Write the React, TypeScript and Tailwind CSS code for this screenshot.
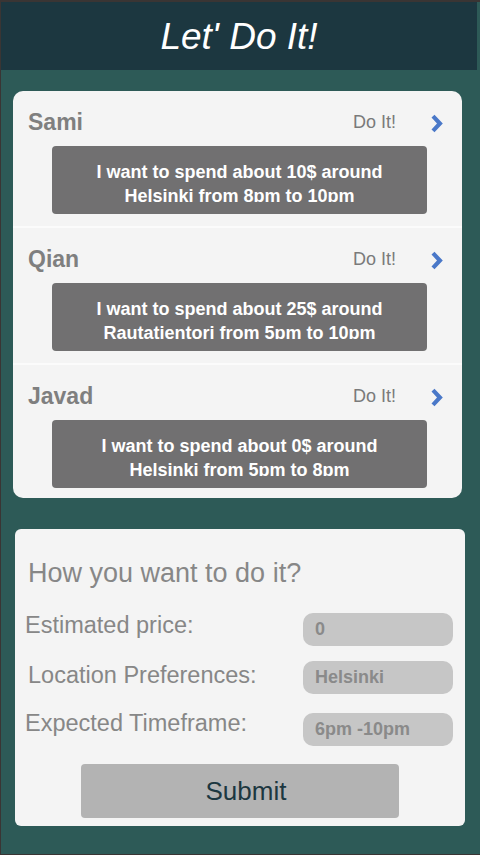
import React from "react";

const requests = [
  { name: "Sami", line1: "I want to spend about 10$ around", line2: "Helsinki from 8pm to 10pm" },
  { name: "Qian", line1: "I want to spend about 25$ around", line2: "Rautatientori from 5pm to 10pm" },
  { name: "Javad", line1: "I want to spend about 0$ around", line2: "Helsinki from 5pm to 8pm" },
];

const fields = [
  { label: "Estimated price:", value: "0", labelCls: "ml-[10px]", inputCls: "mt-[2px]" },
  { label: "Location Preferences:", value: "Helsinki", labelCls: "ml-[13px]", inputCls: "mt-0" },
  { label: "Expected Timeframe:", value: "6pm -10pm", labelCls: "ml-[10px]", inputCls: "mt-[4px]" },
];

function Chevron() {
  return (
    <svg width="14" height="19" viewBox="0 0 14 19" className="block">
      <polygon points="1.5,3.5 4.5,0.8 12.8,9.5 4.5,18.2 1.5,15.5 7,9.5" fill="#4a78c8" />
    </svg>
  );
}

export default function App() {
  return (
    <div
      className="h-[855px] w-[480px] flex flex-col bg-[#2d5a57] border-t-2 border-l border-b border-[#3a3534] overflow-hidden"
      style={{ fontFamily: '"Liberation Sans", Arial, sans-serif' }}
    >
      <header className="h-[68px] w-[476px] shrink-0 bg-[#1c3740] flex items-center justify-center">
        <h1 className="text-[37px] italic text-white leading-none">Let' Do It!</h1>
      </header>

      <div className="mt-[21px] ml-[12px] w-[449px] rounded-[10px] bg-[#f4f4f4] overflow-hidden">
        {requests.map((r, i) => (
          <div
            key={r.name}
            className={
              i < requests.length - 1
                ? "pt-[11px] pb-[12px] border-b-2 border-[#fbfbfb]"
                : "pt-[11px] pb-[10px]"
            }
          >
            <div className="h-[40px] flex items-center pl-[15px]">
              <span className="text-[23px] font-bold text-[#7f7f7f]">{r.name}</span>
              <span className="ml-auto text-[18px] text-[#7a7a7a]">Do It!</span>
              <span className="ml-[34px] mr-[18px] mt-[3px]">
                <Chevron />
              </span>
            </div>
            <div className="mt-[4px] ml-[39px] w-[375px] h-[68px] rounded-[4px] bg-[#717071] pt-[14px]">
              <div className="h-[42px] overflow-hidden text-center text-white font-bold text-[18px] leading-[24px]">
                <div>{r.line1}</div>
                <div>{r.line2}</div>
              </div>
            </div>
          </div>
        ))}
      </div>

      <div className="mt-[31px] ml-[14px] w-[450px] rounded-[6px] bg-[#f4f4f4] pt-[29px] pb-[8px]">
        <h2 className="ml-[13px] text-[27px] leading-[31px] text-[#878787]">How you want to do it?</h2>
        <div className="mt-[22px] flex flex-col gap-[15px]">
          {fields.map((f) => (
            <div key={f.label} className="flex items-start justify-between pr-[12px]">
              <span className={"text-[23.5px] leading-[28px] text-[#878787] " + f.labelCls}>{f.label}</span>
              <div
                className={
                  "w-[150px] h-[33px] rounded-[10px] bg-[#c6c6c6] flex items-center pl-[12px] text-[18px] font-bold text-[#8a8a8a] " +
                  f.inputCls
                }
              >
                {f.value}
              </div>
            </div>
          ))}
        </div>
        <div className="mt-[18px] flex justify-center">
          <button className="w-[318px] h-[54px] rounded-[4px] bg-[#b3b3b3] pl-[12px] text-[26px] text-[#1c3740]">
            Submit
          </button>
        </div>
      </div>
    </div>
  );
}
